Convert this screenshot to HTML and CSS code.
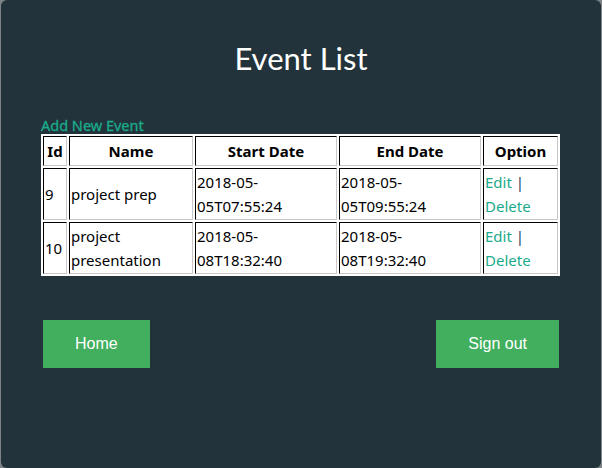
FILE: index.html
```html
<!DOCTYPE html>
<html>
<head>
<meta charset="utf-8">
<link rel="stylesheet" href="styles.css">
</head>
<body>
<div class="frame">
  <h1 class="title">Event List</h1>
  <div class="content">
    <a class="add-link" href="#">Add New Event</a>
    <table class="events">
      <thead>
        <tr>
          <th class="c-id">Id</th>
          <th class="c-name">Name</th>
          <th class="c-date">Start Date</th>
          <th class="c-date">End Date</th>
          <th class="c-opt">Option</th>
        </tr>
      </thead>
      <tbody>
        <tr>
          <td>9</td>
          <td>project prep</td>
          <td>2018-05-05T07:55:24</td>
          <td>2018-05-05T09:55:24</td>
          <td><a href="#">Edit</a> <span class="sep">|</span> <a href="#">Delete</a></td>
        </tr>
        <tr>
          <td>10</td>
          <td>project presentation</td>
          <td>2018-05-08T18:32:40</td>
          <td>2018-05-08T19:32:40</td>
          <td><a href="#">Edit</a> <span class="sep">|</span> <a href="#">Delete</a></td>
        </tr>
      </tbody>
    </table>
    <div class="actions">
      <button class="btn">Home</button>
      <button class="btn">Sign out</button>
    </div>
  </div>
</div>
</body>
</html>
```
FILE: styles.css
```css
html, body {
  margin: 0;
  padding: 0;
  background: #7d8386;
}
.frame {
  box-sizing: border-box;
  height: 468px;
  margin: 0 1px;
  background: #22333b;
  border-radius: 6px;
  padding-top: 38px;
}
.title {
  margin: 0;
  text-align: center;
  font-family: "Lato", sans-serif;
  font-weight: 400;
  font-size: 31px;
  line-height: 40px;
  color: #ffffff;
}
.content {
  margin: 39px 0 0 40px;
  width: 519px;
}
.add-link {
  display: block;
  font-family: "Noto Sans", sans-serif;
  font-size: 14.5px;
  line-height: 17px;
  color: #1aab8b;
  text-decoration: none;
  -webkit-text-stroke: 0.3px #1aab8b;
}
.events {
  width: 519px;
  table-layout: fixed;
  background: #ffffff;
  border-spacing: 2px;
  border: 0;
  font-family: "Noto Sans", sans-serif;
  font-size: 15px;
  line-height: 24px;
  color: #000;
}
.events th, .events td {
  box-sizing: border-box;
  padding: 1px;
  border: 1px inset #808080;
  border-color: #222 #c8c8c8 #c8c8c8 #222;
  vertical-align: middle;
  text-align: left;
}
.events th {
  padding: 2px 1px;
  text-align: center;
  font-weight: 700;
}
.c-id { width: 24px; }
.c-name { width: 124px; }
.c-date { width: 142px; }
.c-opt { width: 75px; }
.events a {
  color: #1aab8b;
  text-decoration: none;
}
.sep { color: #1d3a63; }
.actions {
  margin-top: 44px;
  display: flex;
  justify-content: space-between;
  padding: 0 1px 0 2px;
}
.btn {
  height: 48px;
  border: 0;
  background: #41af5e;
  color: #ffffff;
  font-family: "Liberation Sans", Arial, sans-serif;
  font-size: 16px;
  padding: 0 32px;
  cursor: pointer;
}
```
